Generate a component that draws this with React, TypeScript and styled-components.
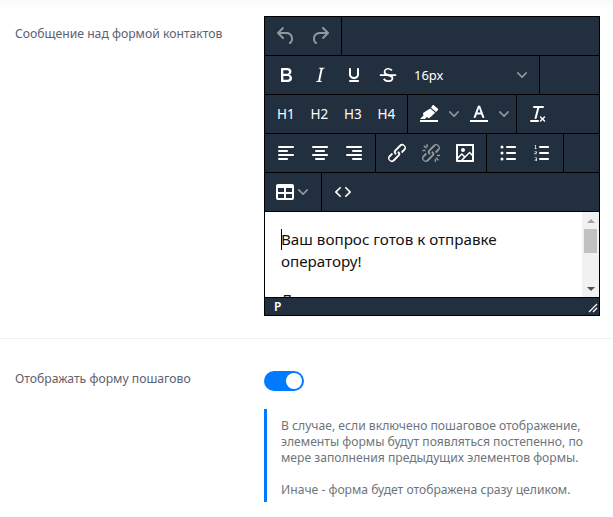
import React from "react";
import styled, { createGlobalStyle } from "styled-components";

const Global = createGlobalStyle`
  html, body { margin: 0; padding: 0; background: #fff; }
  body { font-family: "Noto Sans", "Open Sans", sans-serif; }
`;

const Page = styled.div`
  width: 613px;
  height: 517px;
  overflow: hidden;
  padding-top: 16px;
  box-sizing: border-box;
  background: linear-gradient(#f9f9f9 0, #ffffff 10px);
`;

const Row = styled.div<{ $bottom?: number; $top?: number }>`
  display: flex;
  align-items: flex-start;
  padding-top: ${(p) => p.$top ?? 0}px;
  padding-bottom: ${(p) => p.$bottom ?? 0}px;
`;

const Divider = styled.div`
  height: 1px;
  background: #eeeef3;
`;

const Label = styled.div<{ $offset?: number }>`
  width: 249px;
  margin-left: 15px;
  padding-top: ${(p) => p.$offset ?? 0}px;
  font-size: 12.2px;
  line-height: 16px;
  color: #5c6270;
`;

const Editor = styled.div`
  width: 336px;
  box-sizing: border-box;
  border: 1px solid #000;
  background: #222f3e;
`;

const ToolRow = styled.div`
  display: flex;
  height: 38px;
  border-bottom: 1px solid #000;
`;

const Group = styled.div`
  display: flex;
  align-items: center;
  padding: 0 4px;
  border-right: 1px solid #000;
`;

const PlainGroup = styled(Group)`
  border-right: none;
`;

const ToolButton = styled.div<{ $w?: number; $off?: boolean }>`
  width: ${(p) => p.$w ?? 34}px;
  height: 34px;
  flex: none;
  display: flex;
  align-items: center;
  justify-content: center;
  color: #fff;
  opacity: ${(p) => (p.$off ? 0.5 : 1)};
  font-size: 13.5px;
  font-weight: 400;
  svg { fill: currentColor; display: block; }
`;

const Caret = styled.div`
  width: 16px;
  height: 34px;
  flex: none;
  display: flex;
  align-items: center;
  justify-content: center;
  color: #fff;
  opacity: 0.5;
  svg { fill: currentColor; display: block; }
`;

const TableButton = styled.div`
  width: 48px;
  height: 34px;
  display: flex;
  align-items: center;
  padding-left: 4px;
  box-sizing: border-box;
  color: #fff;
  svg { fill: currentColor; display: block; flex: none; }
  svg + svg { opacity: 0.5; margin-left: 1px; }
`;

const SizeSelect = styled.div`
  width: 130px;
  height: 34px;
  box-sizing: border-box;
  padding: 0 8px 0 9px;
  display: flex;
  align-items: center;
  justify-content: space-between;
  color: #fff;
  font-size: 13px;
  svg { fill: currentColor; opacity: 0.5; }
`;

const Body = styled.div`
  display: flex;
  height: 85px;
  background: #fff;
  overflow: hidden;
`;

const Content = styled.div`
  flex: 1;
  padding: 16px 16px 0;
  font-size: 15.2px;
  line-height: 22px;
  color: #111;
  overflow: hidden;
  p { margin: 0 0 16px; }
`;

const Cursor = styled.span`
  display: inline-block;
  width: 1px;
  height: 21px;
  margin-right: -1px;
  background: #000;
  vertical-align: -5px;
`;

const ScrollBar = styled.div`
  width: 17px;
  background: #f1f1f1;
  display: flex;
  flex-direction: column;
  align-items: center;
  flex: none;
`;

const ScrollArrow = styled.div<{ $down?: boolean }>`
  height: 17px;
  width: 17px;
  display: flex;
  align-items: center;
  justify-content: center;
  &::before {
    content: "";
    border-left: 4px solid transparent;
    border-right: 4px solid transparent;
    ${(p) => (p.$down ? "border-top: 4px solid #505050;" : "border-bottom: 4px solid #a3a3a3;")}
  }
`;

const ScrollThumb = styled.div`
  width: 13px;
  height: 24px;
  background: #c1c1c1;
`;

const ScrollGap = styled.div`
  flex: 1;
`;

const StatusBar = styled.div`
  height: 17px;
  border-top: 1px solid #000;
  display: flex;
  align-items: center;
  justify-content: space-between;
  padding: 0 1px 0 9px;
  color: #fff;
  font-size: 12px;
  font-weight: 600;
  text-transform: uppercase;
`;

const Toggle = styled.div`
  width: 40px;
  height: 20px;
  border-radius: 10px;
  background: #007bff;
  display: flex;
  justify-content: flex-end;
  align-items: center;
  padding: 2px;
  box-sizing: border-box;
  &::after {
    content: "";
    width: 16px;
    height: 16px;
    border-radius: 50%;
    background: #fff;
  }
`;

const Side = styled.div`
  width: 336px;
`;

const Note = styled.div`
  margin-top: 18px;
  border-left: 3px solid #007bff;
  padding: 9px 0 4px 14px;
  width: 336px;
  box-sizing: border-box;
  font-size: 12.15px;
  line-height: 16px;
  color: #6c757d;
  p { margin: 0 0 16px; }
  p:last-child { margin: 0; }
`;

const P = ({ d, s = 24, rule }: { d: string; s?: number; rule?: boolean }) => (
  <svg width={s} height={s} viewBox="0 0 24 24">
    <path d={d} fillRule={rule ? "evenodd" : "nonzero"} />
  </svg>
);

const Chev = () => (
  <svg width="10" height="10" viewBox="0 0 10 10">
    <path d="M8.7 2.2c.3-.3.8-.3 1 0 .4.4.4.9 0 1.2L5.7 7.8c-.3.3-.9.3-1.2 0L.2 3.4a.8.8 0 0 1 0-1.2c.3-.3.8-.3 1.1 0L5 6l3.7-3.8Z" />
  </svg>
);

const icons = {
  undo: "M6.4 8H12c3.7 0 6.2 2 6.8 5.1.6 2.7-.4 5.6-2.3 6.8a1 1 0 0 1-1-1.8c1.1-.6 1.8-2.7 1.4-4.6-.5-2.1-2.1-3.5-4.9-3.5H6.4l3.3 3.3a1 1 0 1 1-1.4 1.4l-5-5a1 1 0 0 1 0-1.4l5-5a1 1 0 0 1 1.4 1.4L6.4 8Z",
  redo: "M17.6 10H12c-2.8 0-4.4 1.4-4.9 3.5-.4 2 .3 4 1.4 4.6a1 1 0 1 1-1 1.8c-2-1.2-2.9-4.1-2.3-6.8.6-3 3-5.1 6.8-5.1h5.6l-3.3-3.3a1 1 0 1 1 1.4-1.4l5 5a1 1 0 0 1 0 1.4l-5 5a1 1 0 0 1-1.4-1.4l3.3-3.3Z",
  bold: "M7.8 19c-.3 0-.5 0-.6-.2l-.2-.5V5.7c0-.2 0-.4.2-.5l.6-.2h5c1.5 0 2.7.3 3.5 1 .7.6 1.1 1.4 1.1 2.5a3 3 0 0 1-.6 1.9c-.4.6-1 1-1.6 1.2.4.1.9.3 1.3.6s.8.7 1 1.2c.4.4.5 1 .5 1.6 0 1.3-.4 2.3-1.3 3-.8.7-2.1 1-3.8 1H7.8Zm5-8.3c.6 0 1.2-.1 1.6-.5.4-.3.6-.7.6-1.3 0-1.1-.8-1.7-2.3-1.7H9.3v3.5h3.4Zm.5 6c.7 0 1.3-.1 1.7-.4.4-.4.6-.9.6-1.5s-.2-1-.7-1.4c-.4-.3-1-.4-2-.4H9.4v3.8h4Z",
  italic: "M16.7 4.7l-.1.9h-.3c-.6 0-1 0-1.4.3-.3.3-.4.6-.5 1.1l-2.1 9.8v.6c0 .5.4.8 1.4.8h.2l-.2.8H8l.2-.8h.2c1.1 0 1.8-.5 2-1.5l2-9.8.1-.5c0-.6-.4-.8-1.4-.8h-.3l.2-.9h5.8Z",
  underline: "M16 5c.6 0 1 .4 1 1v5.5a4 4 0 0 1-.4 1.8l-1 1.4a5.3 5.3 0 0 1-5.5 1 5 5 0 0 1-1.6-1c-.5-.4-.8-.9-1.1-1.4a4 4 0 0 1-.4-1.8V6c0-.6.4-1 1-1s1 .4 1 1v5.5c0 .3 0 .6.2 1l.6.7a3.3 3.3 0 0 0 2.2.8 3.4 3.4 0 0 0 2.2-.8c.3-.2.4-.5.6-.8l.2-.9V6c0-.6.4-1 1-1ZM8 17h8c.6 0 1 .4 1 1s-.4 1-1 1H8a1 1 0 0 1 0-2Z",
  strike: "M15.6 8.5c-.5-.7-1-1.1-1.3-1.3-.6-.4-1.3-.6-2-.6-2.7 0-2.8 1.7-2.8 2.1 0 1.6 1.8 2 3.2 2.3 4.4.9 4.6 2.8 4.6 3.9 0 1.4-.7 4.1-5 4.1A6.2 6.2 0 0 1 7 16.4l1.5-1.1c.4.6 1.6 2 3.7 2 1.6 0 2.5-.4 3-1 .3-.4.3-.7.3-1 0-.9-.9-1.5-2.9-1.9-1.1-.2-4.9-.9-4.9-4.3 0-2.8 2.3-4.1 4.4-4.1 2.3 0 3.6 1 4.5 2.1l-1.5.9ZM4.5 11.2h15c.5 0 .9.4.9.9s-.4.9-.9.9h-15c-.5 0-.9-.4-.9-.9s.4-.9.9-.9Z",
  marker: "M3 18h18v2H3v-2ZM15.4 3.5c.5-.5 1.2-.5 1.7-.1l3.6 3c.6.5.6 1.3.1 1.8L19 10l-5-4.2 1.4-2.3ZM13.2 6.6l5 4.2-5.4 5c-.4.4-1 .5-1.5.2L9.9 15 8 17H3l3.6-3.8-.5-1c-.3-.5-.1-1.1.3-1.5l6.8-4.1Z",
  colorA: "M3 18h18v2H3v-2ZM10.7 4.3c.2-.5.7-.8 1.3-.8s1.1.3 1.3.8l4 10.6c.1.6-.3 1.1-1 1.1-.5 0-.9-.3-1.1-.7l-1-2.8H9.8l-1 2.8c-.2.4-.6.7-1.1.7-.7 0-1.1-.5-1-1.1l4-10.6ZM10.5 10.5h3L12 6.2l-1.5 4.3Z",
  clear: "M13.2 6a1 1 0 0 1 0 .2l-2.6 10a1 1 0 0 1-1 .8h-.2a.8.8 0 0 1-.8-1l2.6-10H8a1 1 0 1 1 0-2h9a1 1 0 0 1 0 2h-3.8ZM5 18h7a1 1 0 0 1 0 2H5a1 1 0 0 1 0-2Zm13 1.5L16.5 18 15 19.5a.7.7 0 0 1-1-1l1.5-1.5-1.5-1.5a.7.7 0 0 1 1-1l1.5 1.5 1.5-1.5a.7.7 0 0 1 1 1L17.5 17l1.5 1.5a.7.7 0 0 1-1 1Z",
  left: "M5 5h14c.6 0 1 .4 1 1s-.4 1-1 1H5a1 1 0 1 1 0-2Zm0 4h8c.6 0 1 .4 1 1s-.4 1-1 1H5a1 1 0 1 1 0-2Zm0 8h8c.6 0 1 .4 1 1s-.4 1-1 1H5a1 1 0 0 1 0-2Zm0-4h14c.6 0 1 .4 1 1s-.4 1-1 1H5a1 1 0 0 1 0-2Z",
  center: "M5 5h14c.6 0 1 .4 1 1s-.4 1-1 1H5a1 1 0 1 1 0-2Zm3 4h8c.6 0 1 .4 1 1s-.4 1-1 1H8a1 1 0 1 1 0-2Zm0 8h8c.6 0 1 .4 1 1s-.4 1-1 1H8a1 1 0 0 1 0-2Zm-3-4h14c.6 0 1 .4 1 1s-.4 1-1 1H5a1 1 0 0 1 0-2Z",
  right: "M5 5h14c.6 0 1 .4 1 1s-.4 1-1 1H5a1 1 0 1 1 0-2Zm6 4h8c.6 0 1 .4 1 1s-.4 1-1 1h-8a1 1 0 0 1 0-2Zm0 8h8c.6 0 1 .4 1 1s-.4 1-1 1h-8a1 1 0 0 1 0-2Zm-6-4h14c.6 0 1 .4 1 1s-.4 1-1 1H5a1 1 0 0 1 0-2Z",
  link: "M6.2 12.3a1 1 0 0 1 1.4 1.4l-2 2a2 2 0 1 0 2.6 2.8l4.8-4.8a1 1 0 0 0 0-1.4 1 1 0 1 1 1.4-1.3 2.9 2.9 0 0 1 0 4L9.6 20a3.9 3.9 0 0 1-5.5-5.5l2-2Zm11.6-.6a1 1 0 0 1-1.4-1.4l2-2a2 2 0 1 0-2.6-2.8L11 10.3a1 1 0 0 0 0 1.4A1 1 0 1 1 9.6 13a2.9 2.9 0 0 1 0-4L14.4 4a3.9 3.9 0 0 1 5.5 5.5l-2 2Z",
  unlink: "M6.2 12.3a1 1 0 0 1 1.4 1.4l-2.1 2a2 2 0 1 0 2.7 2.8l4.8-4.8a1 1 0 0 0 0-1.4 1 1 0 1 1 1.4-1.3 2.9 2.9 0 0 1 0 4.1l-4.8 4.8a3.9 3.9 0 0 1-5.5-5.5l2-2.1Zm11.6-.6a1 1 0 0 1-1.4-1.4l2.1-2a2 2 0 1 0-2.7-2.8L11 10.3a1 1 0 0 0 0 1.4 1 1 0 1 1-1.4 1.3 2.9 2.9 0 0 1 0-4.1l4.8-4.8a3.9 3.9 0 0 1 5.5 5.5l-2 2.1ZM7.6 6.3a.8.8 0 0 1-1 1.1L4.6 5.4a.8.8 0 0 1 1-1l2 1.9Zm-1.4 2.5a.8.8 0 0 1 0 1.5H3.8a.8.8 0 0 1 0-1.5h2.4Zm2.6-3a.8.8 0 0 1-1.5 0V3.4a.8.8 0 0 1 1.5 0v2.4Zm8 11.9a.8.8 0 0 1 1-1.1l2 2a.8.8 0 0 1-1 1l-2-2Zm1.4-2.5a.8.8 0 0 1 0-1.5h2.4a.8.8 0 0 1 0 1.5h-2.4Zm-2.6 3a.8.8 0 0 1 1.5 0v2.4a.8.8 0 0 1-1.5 0v-2.4Z",
  image: "M5 15.7l3.3-3.2c.3-.3.7-.3 1 0L12 15l4.1-4c.3-.4.8-.4 1 0l2 1.9V5H5v10.7ZM5 18V19h3l2.8-2.9-2-2L5 17.9Zm14-3l-2.5-2.4-6.4 6.5H19v-4ZM4 3h16c.6 0 1 .4 1 1v16c0 .6-.4 1-1 1H4a1 1 0 0 1-1-1V4c0-.6.4-1 1-1Zm6 8a2 2 0 1 0 0-4 2 2 0 0 0 0 4Z",
  bullets: "M11 5h8c.6 0 1 .4 1 1s-.4 1-1 1h-8a1 1 0 0 1 0-2Zm0 6h8c.6 0 1 .4 1 1s-.4 1-1 1h-8a1 1 0 0 1 0-2Zm0 6h8c.6 0 1 .4 1 1s-.4 1-1 1h-8a1 1 0 0 1 0-2ZM6 4.5a1.5 1.5 0 1 1 0 3 1.5 1.5 0 0 1 0-3Zm0 6a1.5 1.5 0 1 1 0 3 1.5 1.5 0 0 1 0-3Zm0 6a1.5 1.5 0 1 1 0 3 1.5 1.5 0 0 1 0-3Z",
  numbers: "M10 17h8c.6 0 1 .4 1 1s-.4 1-1 1h-8a1 1 0 0 1 0-2Zm0-6h8c.6 0 1 .4 1 1s-.4 1-1 1h-8a1 1 0 0 1 0-2Zm0-6h8c.6 0 1 .4 1 1s-.4 1-1 1h-8a1 1 0 1 1 0-2ZM6 4v3.5h.8V8H4.5v-.5h.8V4.8h-.8v-.4L6 4Zm-1.5 6.5h2.3v1.7H5.3v.6h1.5v.5H4.5v-1.6H6v-.7H4.5v-.5Zm0 6h2.3v3.5H4.5v-.5H6v-.9H4.9v-.6H6v-1H4.5v-.5Z",
  table: "M19 4a2 2 0 0 1 2 2v12a2 2 0 0 1-2 2H5a2 2 0 0 1-2-2V6c0-1.1.9-2 2-2h14Zm0 10h-6v4h6v-4Zm-8 0H5v4h6v-4Zm8-6h-6v4h6V8Zm-8 0H5v4h6V8Z",
  code: "M9.8 15.7c.3.3.3.8 0 1-.3.4-.9.4-1.2 0l-4.4-4.1a.8.8 0 0 1 0-1.2l4.4-4.2c.3-.3.9-.3 1.2 0 .3.3.3.8 0 1.1L6 12l3.8 3.7ZM14.2 15.7c-.3.3-.3.8 0 1 .3.4.9.4 1.2 0l4.4-4.1c.3-.3.3-.9 0-1.2l-4.4-4.2a.8.8 0 0 0-1.2 0c-.3.3-.3.8 0 1.1L18 12l-3.8 3.7Z",
};

const Heading = ({ children }: { children: string }) => <ToolButton $w={33.5}>{children}</ToolButton>;

export default function App() {
  return (
    <Page>
      <Global />
      <Row $bottom={22}>
        <Label $offset={10}>Сообщение над формой контактов</Label>
        <Editor>
          <ToolRow>
            <Group>
              <ToolButton $off><P d={icons.undo} /></ToolButton>
              <ToolButton $off><P d={icons.redo} /></ToolButton>
            </Group>
          </ToolRow>
          <ToolRow>
            <Group>
              <ToolButton><P d={icons.bold} /></ToolButton>
              <ToolButton><P d={icons.italic} /></ToolButton>
              <ToolButton><P d={icons.underline} /></ToolButton>
              <ToolButton><P d={icons.strike} /></ToolButton>
              <SizeSelect>16px<Chev /></SizeSelect>
            </Group>
          </ToolRow>
          <ToolRow>
            <Group>
              <Heading>H1</Heading>
              <Heading>H2</Heading>
              <Heading>H3</Heading>
              <Heading>H4</Heading>
            </Group>
            <Group>
              <ToolButton><P d={icons.marker} /></ToolButton>
              <Caret><Chev /></Caret>
              <ToolButton><P d={icons.colorA} /></ToolButton>
              <Caret><Chev /></Caret>
            </Group>
            <PlainGroup>
              <ToolButton><P d={icons.clear} /></ToolButton>
            </PlainGroup>
          </ToolRow>
          <ToolRow>
            <Group>
              <ToolButton><P d={icons.left} /></ToolButton>
              <ToolButton><P d={icons.center} /></ToolButton>
              <ToolButton><P d={icons.right} /></ToolButton>
            </Group>
            <Group>
              <ToolButton><P d={icons.link} /></ToolButton>
              <ToolButton $off><P d={icons.unlink} /></ToolButton>
              <ToolButton><P d={icons.image} rule /></ToolButton>
            </Group>
            <Group>
              <ToolButton><P d={icons.bullets} /></ToolButton>
              <ToolButton><P d={icons.numbers} /></ToolButton>
            </Group>
          </ToolRow>
          <ToolRow>
            <Group>
              <TableButton><P d={icons.table} rule /><Chev /></TableButton>
            </Group>
            <PlainGroup>
              <ToolButton><P d={icons.code} /></ToolButton>
            </PlainGroup>
          </ToolRow>
          <Body>
            <Content>
              <p><Cursor />Ваш вопрос готов к отправке оператору!</p>
              <p>Для</p>
            </Content>
            <ScrollBar>
              <ScrollArrow />
              <ScrollThumb />
              <ScrollGap />
              <ScrollArrow $down />
            </ScrollBar>
          </Body>
          <StatusBar>
            p
            <svg width="12" height="12" viewBox="0 0 12 12" stroke="#fff" strokeWidth="1.2">
              <path d="M11 3 3 11M11 7 7 11" fill="none" />
            </svg>
          </StatusBar>
        </Editor>
      </Row>
      <Divider />
      <Row $top={32}>
        <Label>Отображать форму пошагово</Label>
        <Side>
          <Toggle />
          <Note>
            <p>В случае, если включено пошаговое отображение, элементы формы будут появляться постепенно, по мере заполнения предыдущих элементов формы.</p>
            <p>Иначе - форма будет отображена сразу целиком.</p>
          </Note>
        </Side>
      </Row>
    </Page>
  );
}
